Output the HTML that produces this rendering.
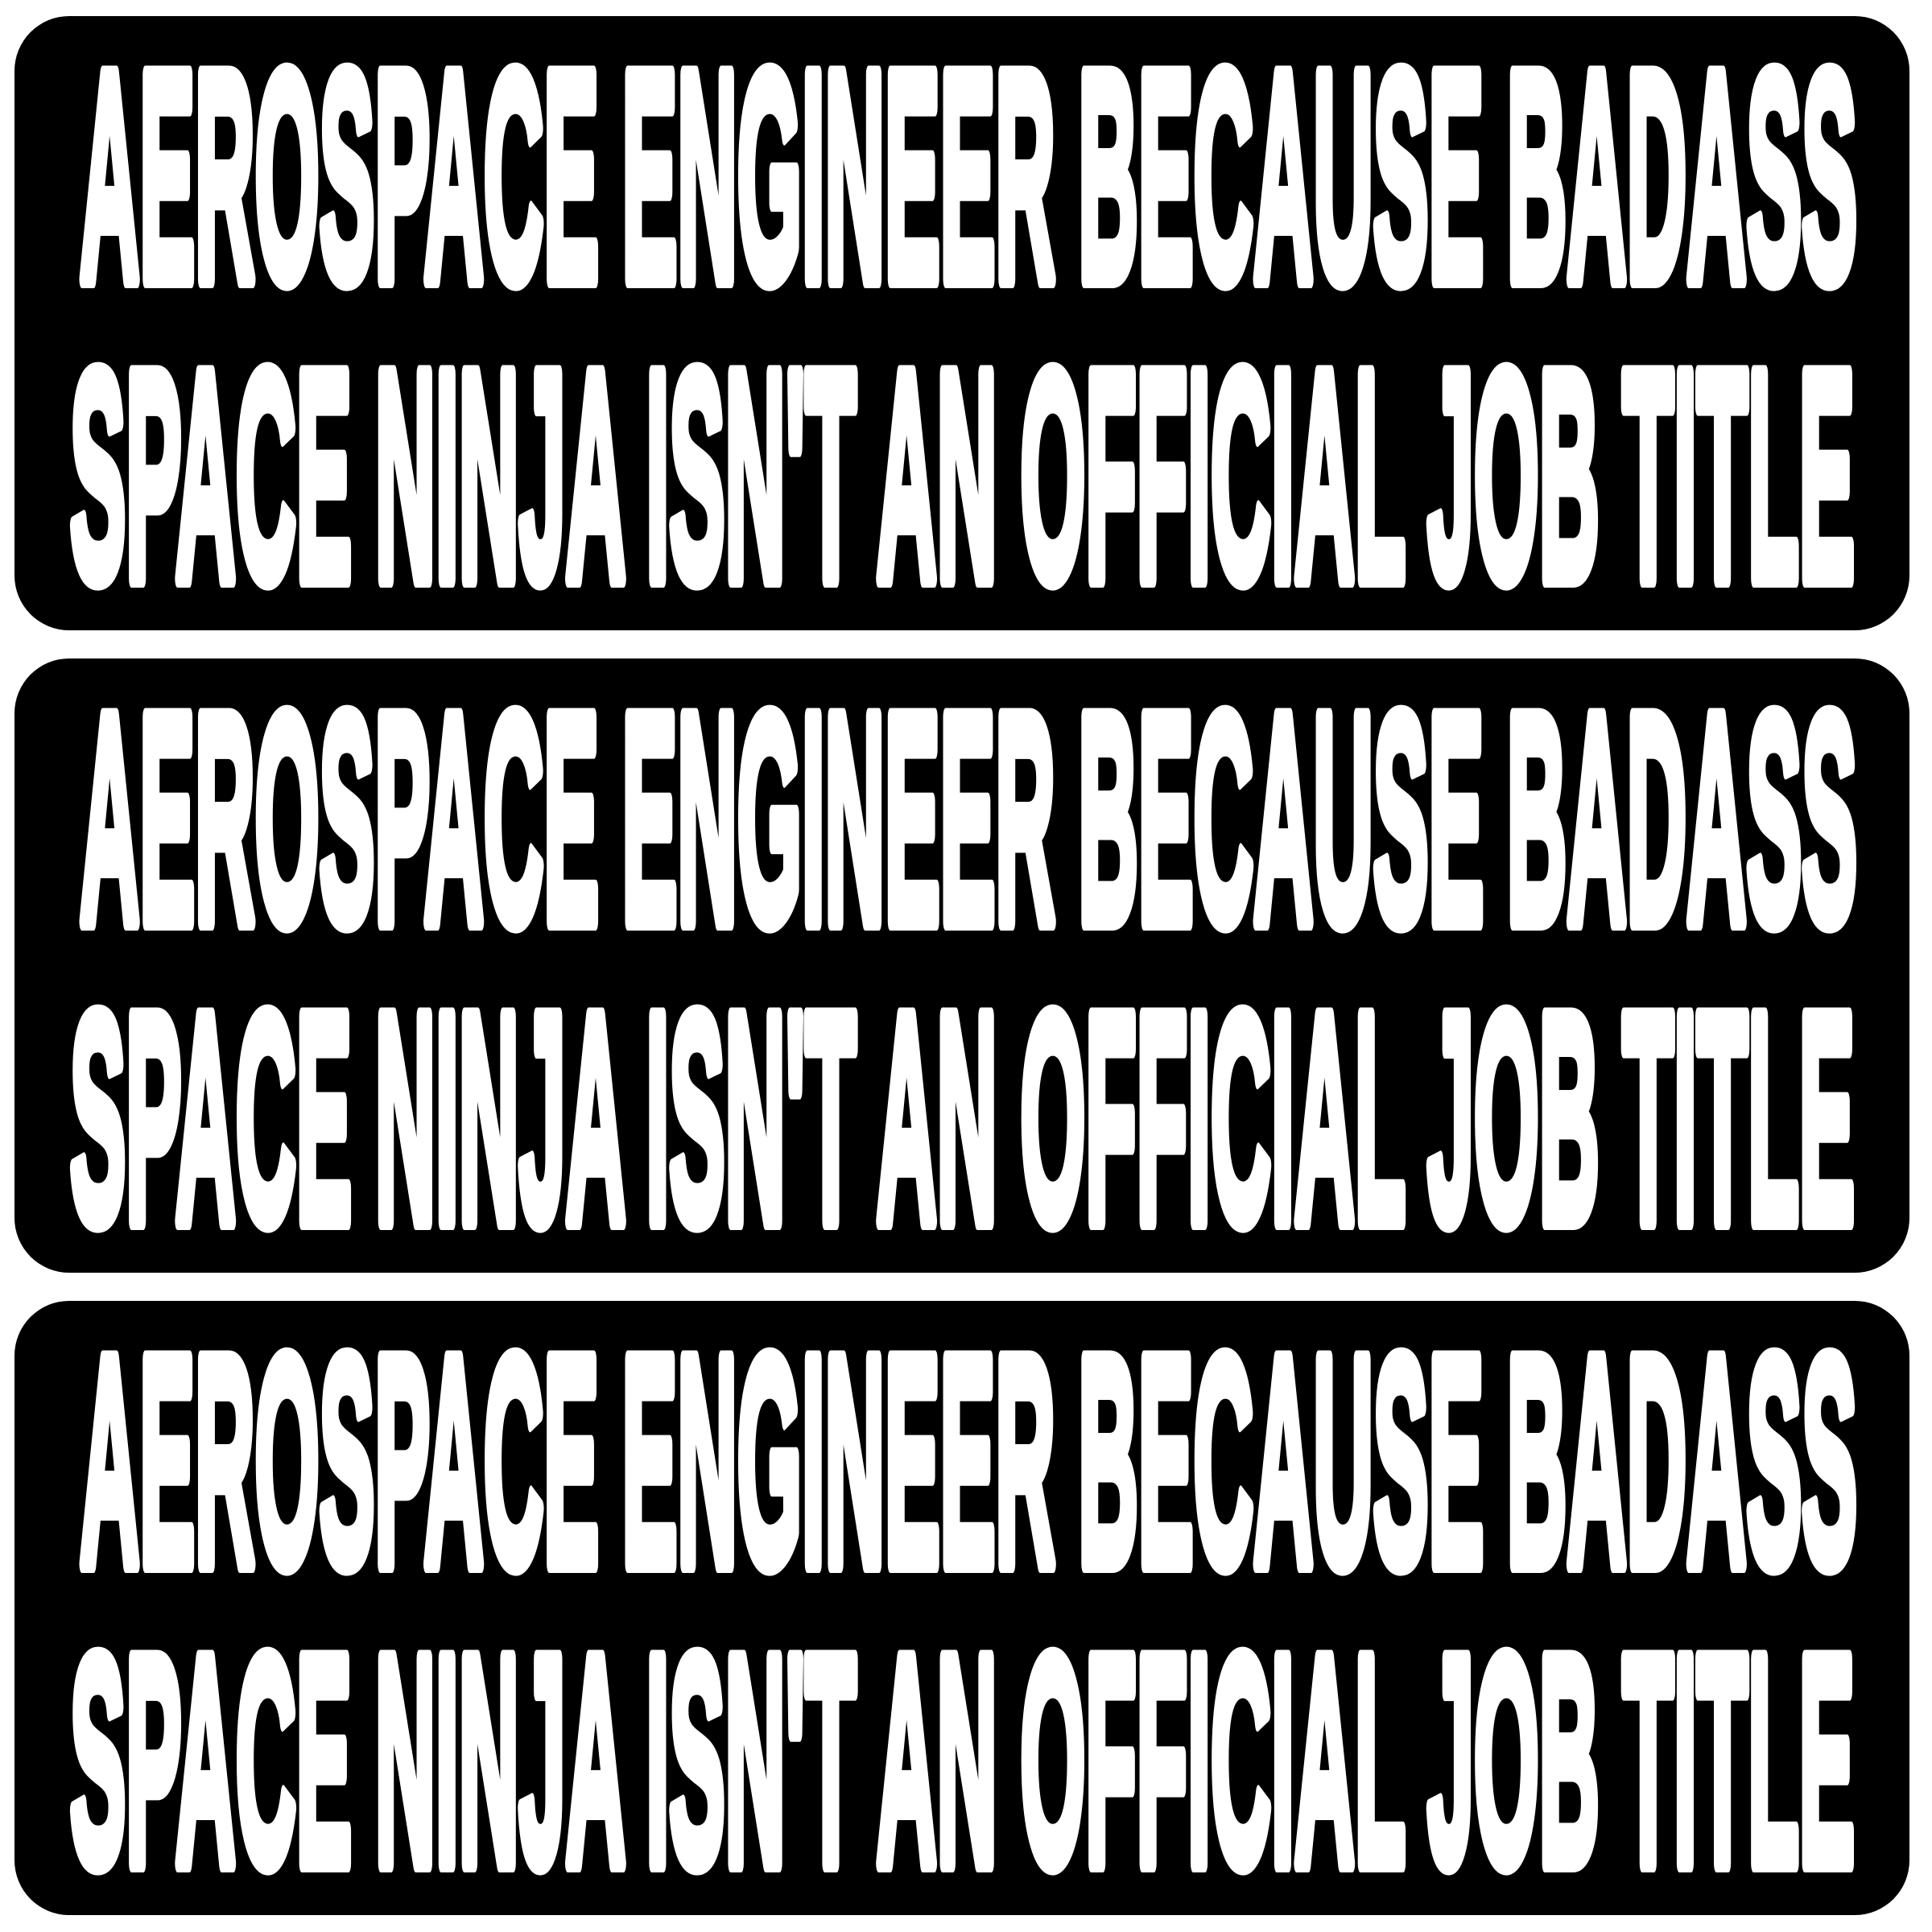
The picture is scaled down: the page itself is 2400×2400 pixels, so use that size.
<!DOCTYPE html>
<html><head><meta charset="utf-8"><style>
html,body{margin:0;padding:0;background:#fff;width:2400px;height:2400px;overflow:hidden}
</style></head><body>
<svg width="2400" height="2400" viewBox="0 0 2400 2400" xmlns="http://www.w3.org/2000/svg">
<rect width="2400" height="2400" fill="#fff"/>
<g font-family="Liberation Sans Narrow, Liberation Sans, sans-serif" font-weight="bold" font-size="370" fill="#fff" stroke="#fff" stroke-width="22" stroke-linejoin="round">
<g transform="translate(0,20)">
<rect x="18" y="0" width="2354" height="763" rx="68" fill="#000" stroke="none"/>
<text x="99" y="327" textLength="2208" lengthAdjust="spacingAndGlyphs">AEROSPACE ENGINEER BECAUSE BADASS</text>
<text x="87" y="699" textLength="2217" lengthAdjust="spacingAndGlyphs">SPACE NINJA ISN'T AN OFFICIAL JOB TITLE</text>
</g>
<g transform="translate(0,818)">
<rect x="18" y="0" width="2354" height="763" rx="68" fill="#000" stroke="none"/>
<text x="99" y="327" textLength="2208" lengthAdjust="spacingAndGlyphs">AEROSPACE ENGINEER BECAUSE BADASS</text>
<text x="87" y="699" textLength="2217" lengthAdjust="spacingAndGlyphs">SPACE NINJA ISN'T AN OFFICIAL JOB TITLE</text>
</g>
<g transform="translate(0,1616)">
<rect x="18" y="0" width="2354" height="763" rx="68" fill="#000" stroke="none"/>
<text x="99" y="327" textLength="2208" lengthAdjust="spacingAndGlyphs">AEROSPACE ENGINEER BECAUSE BADASS</text>
<text x="87" y="699" textLength="2217" lengthAdjust="spacingAndGlyphs">SPACE NINJA ISN'T AN OFFICIAL JOB TITLE</text>
</g>
</g>
</svg>
</body></html>
